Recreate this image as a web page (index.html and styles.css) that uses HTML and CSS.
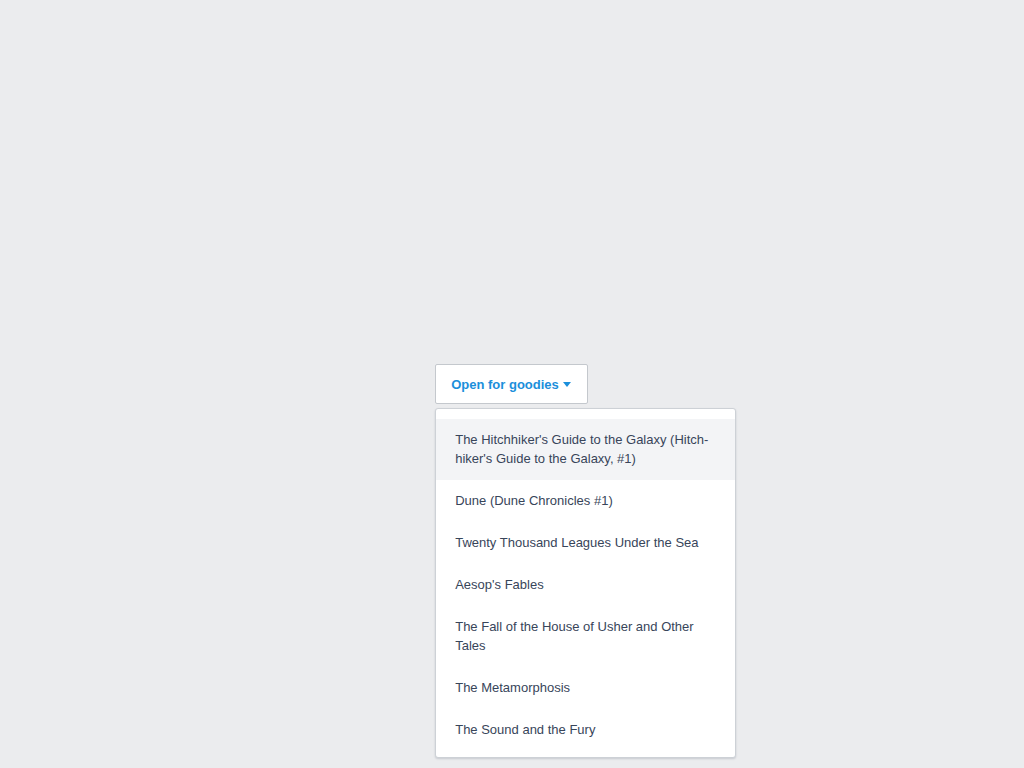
FILE: index.html
```html
<!DOCTYPE html>
<html lang="en">
<head>
<meta charset="utf-8">
<title>Dropdown</title>
<link rel="stylesheet" href="styles.css">
</head>
<body>
<div class="stage">
  <div class="dropdown">
    <button class="trigger" type="button">Open for goodies <span class="caret"></span></button>
    <ul class="menu">
      <li class="item active">The Hitchhiker's Guide to the Galaxy (Hitch&shy;hiker's Guide to the Galaxy, #1)</li>
      <li class="item">Dune (Dune Chronicles #1)</li>
      <li class="item">Twenty Thousand Leagues Under the Sea</li>
      <li class="item">Aesop's Fables</li>
      <li class="item">The Fall of the House of Usher and Other Tales</li>
      <li class="item">The Metamorphosis</li>
      <li class="item">The Sound and the Fury</li>
    </ul>
  </div>
</div>
</body>
</html>
```
FILE: styles.css
```css
html, body {
  margin: 0;
  padding: 0;
  height: 100%;
}
body {
  background: #ebecee;
  font-family: "Liberation Sans", Arial, sans-serif;
  font-size: 13px;
  color: #38455a;
}
.stage {
  box-sizing: border-box;
  height: 768px;
  padding-right: 1px;
  display: flex;
  align-items: center;
  justify-content: center;
}
.dropdown {
  position: relative;
}
.trigger {
  display: flex;
  align-items: center;
  gap: 4px;
  box-sizing: border-box;
  height: 40px;
  padding: 0 16px 0 15px;
  background: #fff;
  border: 1px solid #c4c8cd;
  border-radius: 2px;
  font-family: inherit;
  font-size: 13px;
  font-weight: bold;
  color: #1b8fdb;
  cursor: pointer;
}
.caret {
  width: 0;
  height: 0;
  border-left: 4.5px solid transparent;
  border-right: 4.5px solid transparent;
  border-top: 5px solid #1b8fdb;
  margin-top: 1px;
}
.menu {
  position: absolute;
  top: 44px;
  left: 0;
  width: 301px;
  box-sizing: border-box;
  margin: 0;
  padding: 10px 0 6px;
  list-style: none;
  background: #fff;
  border: 1px solid #cdd1d6;
  border-radius: 3px;
  box-shadow: 0 1px 2px rgba(40, 50, 70, 0.18);
}
.item {
  padding: 10.5px 20px 12.5px 19px;
  line-height: 19px;
  hyphens: manual;
}
.item.active {
  background: #f3f4f6;
}
```
